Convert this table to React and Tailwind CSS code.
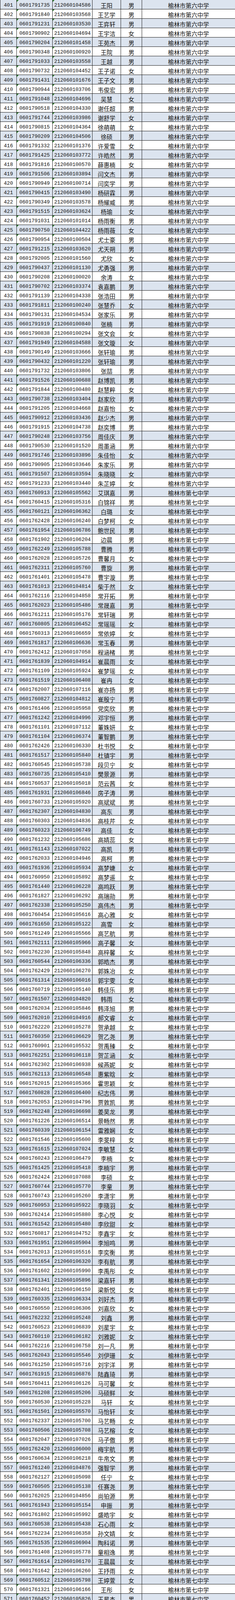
import React from 'react'

// rows 401-452 belong to 第六中学, the rest to 第七中学
const raw = `0601791735 212060104586 王阳 男
0601791840 212060103568 王艺学 男
0601791231 212060103530 王弈轩 男
0601790902 212060104694 王宇洁 女
0601790204 212060101458 王苑杰 男
0601790348 212060100920 王院 男
0601791033 212060103558 王越 男
0601790732 212060104452 王子诺 女
0601791431 212060101676 王子文 男
0601790944 212060103706 韦俊宏 男
0601791048 212060104696 吴慧 女
0601790518 212060104330 谢任超 男
0601791744 212060103986 谢舒学 女
0601790815 212060104364 徐萌萌 女
0601790209 212060104506 徐硕 男
0601791332 212060101376 许爱雪 女
0601791425 212060103772 许皓然 男
0601791816 212060100570 薛惠楠 女
0601791506 212060103894 闫文杰 男
0601790949 212060100714 闫奕学 男
0601790415 212060103490 杨研霖 男
0601790349 212060103578 杨耀威 男
0601791515 212060103624 杨瑜 女
0601791031 212060101014 杨雨衡 男
0601790750 212060104422 杨雨薇 女
0601790954 212060100504 尤士豪 男
0601791215 212060103620 尤天朔 男
0601792005 212060101560 尤欣 女
0601790437 212060101130 尤勇强 男
0601790208 212060100020 余涛 女
0601790702 212060103374 袁嘉鹏 男
0601791139 212060104338 张浩田 男
0601791811 212060100240 张慧乔 女
0601790131 212060104534 张家乐 男
0601791919 212060100840 张楠 男
0601790838 212060100294 张文会 女
0601791949 212060104588 张文璇 女
0601790149 212060103666 张轩瑜 男
0601790432 212060101220 张轩瑜 男
0601791732 212060103806 张喆 男
0601791526 212060100688 赵博凯 男
0601791844 212060100480 赵慧粹 女
0601790738 212060103404 赵家欣 男
0601791205 212060104668 赵嘉怡 女
0601790912 212060103436 赵少杰 男
0601791915 212060104738 赵奕博 男
0601790248 212060103756 周佳庆 男
0601790530 212060101520 周墨涵 男
0601791746 212060103896 朱佳怡 女
0601790905 212060103646 朱家乐 男
0601791507 212060103594 朱晓晓 女
0601791233 212060103440 朱芷婷 女
0601760913 212060105562 艾琪嘉 男
0601760415 212060105316 白锦祥 男
0601760121 212060106362 白璐 女
0601762428 212060106240 白梦柯 女
0601761954 212060106786 鲍世民 男
0601761902 212060106204 边晨 男
0601762249 212060105788 曹腾 男
0601762028 212060105726 曹馨月 女
0601762311 212060105760 曹旋 男
0601761401 212060105478 曹宇漩 男
0601761013 212060104814 柴于然 女
0601762116 212060104858 常开拓 男
0601762023 212060105486 常晟嘉 男
0601761211 212060105176 常轩瑞 男
0601760805 212060106452 常瑶瑶 女
0601760313 212060106659 常依婷 女
0601761817 212060106636 常玉春 男
0601762412 212060107058 程涵楮 男
0601761839 212060104914 崔晨雨 女
0601761109 212060105924 崔梦瑶 女
0601761519 212060106408 崔冉 女
0601762007 212060107116 崔亦扬 男
0601760827 212060104812 崔殷宁 男
0601761406 212060105958 党奕欣 男
0601761242 212060104996 邓宇恒 男
0601761101 212060107112 董姝妍 女
0601761104 212060106374 董智鹏 男
0601762426 212060106330 杜书悦 女
0601761517 212060105840 杜镇宇 男
0601760545 212060105738 段贝宁 女
0601760735 212060105410 樊景源 男
0601760537 212060105018 范云茜 女
0601761931 212060106846 房子涛 男
0601760733 212060105920 高斌斌 男
0601762307 212060104830 高东 男
0601760303 212060104836 高桂芹 女
0601760323 212060106749 高佳 女
0601761232 212060105686 高婧蕊 女
0601761143 212060107022 高凯 男
0601762033 212060104946 高柯 男
0601761936 212060105934 高梦婕 女
0601760950 212060105892 高梦遥 女
0601761440 212060106228 高鸣跃 男
0601761827 212060106292 高瑞勋 男
0601762338 212060105250 高伟杰 男
0601760454 212060105616 高心雅 女
0601761650 212060105122 高雪 女
0601761249 212060105566 高艺航 男
0601762111 212060105966 高子馨 女
0601762230 212060105848 高梓馨 女
0601760544 212060106336 郭皓杰 男
0601762429 212060106270 郭姝冶 女
0601761314 212060106016 郭宇雯 女
0601760719 212060105140 韩佳乐 男
0601761507 212060104820 韩雨 女
0601762034 212060105846 韩泽旭 男
0601762010 212060104916 郝文睿 女
0601762220 212060105278 贺承越 女
0601760350 212060106629 贺乙尧 男
0601760901 212060105532 贺禹臻 女
0601762251 212060106118 贺芷涵 女
0601762302 212060106938 候燕妮 女
0601762113 212060106548 惠紫晗 女
0601762015 212060105366 霍思颖 女
0601760828 212060106400 纪志伟 男
0601762053 212060104796 贾敦凯 男
0601762248 212060106698 姜昊龙 男
0601761226 212060106514 景畅然 男
0601760339 212060106154 雷雅娴 女
0601761546 212060105600 李旻梓 女
0601761615 212060107024 李敏慧 女
0601760243 212060106479 李楠 女
0601761425 212060105418 李楠宇 男
0601762424 212060107088 李硕 女
0601760744 212060105770 李童 男
0601760743 212060105260 李潇宇 男
0601760953 212060105922 李晓羽 女
0601762414 212060105880 李心悦 女
0601761542 212060105480 李欣甜 女
0601760817 212060104752 李鑫宇 女
0601761951 212060105904 李旭鸣 男
0601762013 212060105516 李奕衡 男
0601761654 212060106320 李有航 男
0601761602 212060105990 李禹彤 女
0601761341 212060105896 梁嘉轩 男
0601762401 212060106150 梁新悦 女
0601760335 212060106334 刘好杰 男
0601760550 212060106306 刘嘉欣 女
0601762232 212060105248 刘鑫 男
0601760523 212060106839 刘星宇 女
0601760110 212060106182 刘雅妮 女
0601762216 212060106758 刘一凡 男
0601762043 212060105546 刘伊珊 女
0601761250 212060105716 刘宇洋 男
0601761915 212060106876 陆鑫琦 男
0601760411 212060106126 马可馨 女
0601761208 212060105206 马硕鲜 女
0601760530 212060105228 马轩 女
0601761501 212060105570 马怡轩 女
0601762337 212060105700 马艺畅 女
0601760506 212060105708 马艺榕 女
0601762047 212060107026 马子傲 男
0601762420 212060106000 梅宇航 男
0601760634 212060106218 牛帛文 男
0601761240 212060104876 强智学 男
0601762127 212060105098 任宁 女
0601760505 212060105138 任赛尧 男
0601762025 212060104856 尚铂源 男
0601761943 212060105154 申振 男
0601761802 212060105992 盛皓宇 女
0601760538 212060105438 石心雨 女
0601762234 212060106358 孙文婧 女
0601761535 212060106904 陶科诺 男
0601761408 212060105778 童相逸 男
0601761614 212060106170 王晨晨 女
0601761642 212060106260 王抒雨 女
0601760512 212060105798 王婷萱 女
0601761321 212060106166 王彤 女
0601760452 212060105826 王星杰 男
0601760527 212060105258 王艺璇 女
0601760409 212060105166 王子峰 男
0601760610 212060105110 王紫怡 女
0601760826 212060105352 尉迟泳柏 男
0601760532 212060104868 魏江帆 男
0601762323 212060104980 温昊奇 男
0601761303 212060104758 翁宇彤 女
0601761647 212060106230 武乐天 男
0601760520 212060105108 武学 男
0601762008 212060105636 席一鸣 男
0601762037 212060106354 谢子睦 男
0601760309 212060106124 徐梦楠 男
0601760709 212060106070 徐晓楠 女
0601760304 212060106719 杨帆 女
0601760519 212060104778 杨蕊伊 女
0601761932 212060106174 杨馨怡 女
0601761432 212060106258 殷捷喻 女
0601760429 212060105886 尹嘉豪 男
0601760221 212060106539 尤思甜 女
0601760804 212060106280 张浩哲 男
0601761929 212060106114 张璐 女
0601760529 212060104988 张维嘉 女
0601761632 212060104762 张伟 男
0601762328 212060105640 张心乐 女
0601761153 212060105894 张新乐 男
0601760425 212060105526 张一科 男
0601760428 212060105106 张怡柯 女
0601760351 212060105974 张易天 男
0601762346 212060106848 张宇航 男`

const rows = raw.split('\n').map((line, i) => {
    const [exam, id, name, sex] = line.trim().split(' ')
    const no = 401 + i
    return { no, exam, id, name, sex, school: no <= 452 ? '榆林市第六中学' : '榆林市第七中学' }
})

const rowOdd = 'flex h-6 overflow-hidden border-b border-[#1a1a1a] bg-[#dce4ef] text-[#111]'
const rowEven = 'flex h-6 overflow-hidden border-b border-[#1a1a1a] bg-white text-[#111]'

const numCell = "relative flex h-full shrink-0 items-center justify-center overflow-hidden whitespace-nowrap border-r border-[#222] pt-[4px] font-['Liberation_Mono','DejaVu_Sans_Mono',monospace] text-[13px] leading-none"
const cjkCell = "flex h-full shrink-0 items-center justify-center overflow-hidden whitespace-nowrap border-r border-[#222] pt-[3px] font-['Noto_Sans_CJK_SC','Noto_Sans',sans-serif] text-[15px] leading-none"
const schoolCell = "flex h-full min-w-0 flex-1 items-center justify-center overflow-hidden whitespace-nowrap pt-[3px] font-['Noto_Sans_CJK_SC','Noto_Sans',sans-serif] text-[15px] leading-none"

// little green corner Excel puts on numbers stored as text
const Flag = () => (
    <span className="absolute left-0 top-0 h-0 w-0 border-t-[5px] border-r-[5px] border-t-[#2b7a2b] border-r-transparent" />
)

const Row = ({ r }) => (
    <div className={r.no % 2 === 1 ? rowOdd : rowEven}>
        <div className={numCell + ' w-[43px] border-l'}>{r.no}</div>
        <div className={numCell + ' w-[92px]'}>
            <Flag />
            {r.exam}
        </div>
        <div className={numCell + ' w-[102px]'}>
            <Flag />
            {r.id}
        </div>
        <div className={cjkCell + ' w-[73px]'}>{r.name}</div>
        <div className={cjkCell + ' w-[54px]'}>{r.sex}</div>
        <div className={schoolCell}>{r.school}</div>
    </div>
)

export default function App() {
    return (
        <div className="w-[602px] bg-white">
            {rows.map((r) => (
                <Row key={r.no} r={r} />
            ))}
        </div>
    )
}
